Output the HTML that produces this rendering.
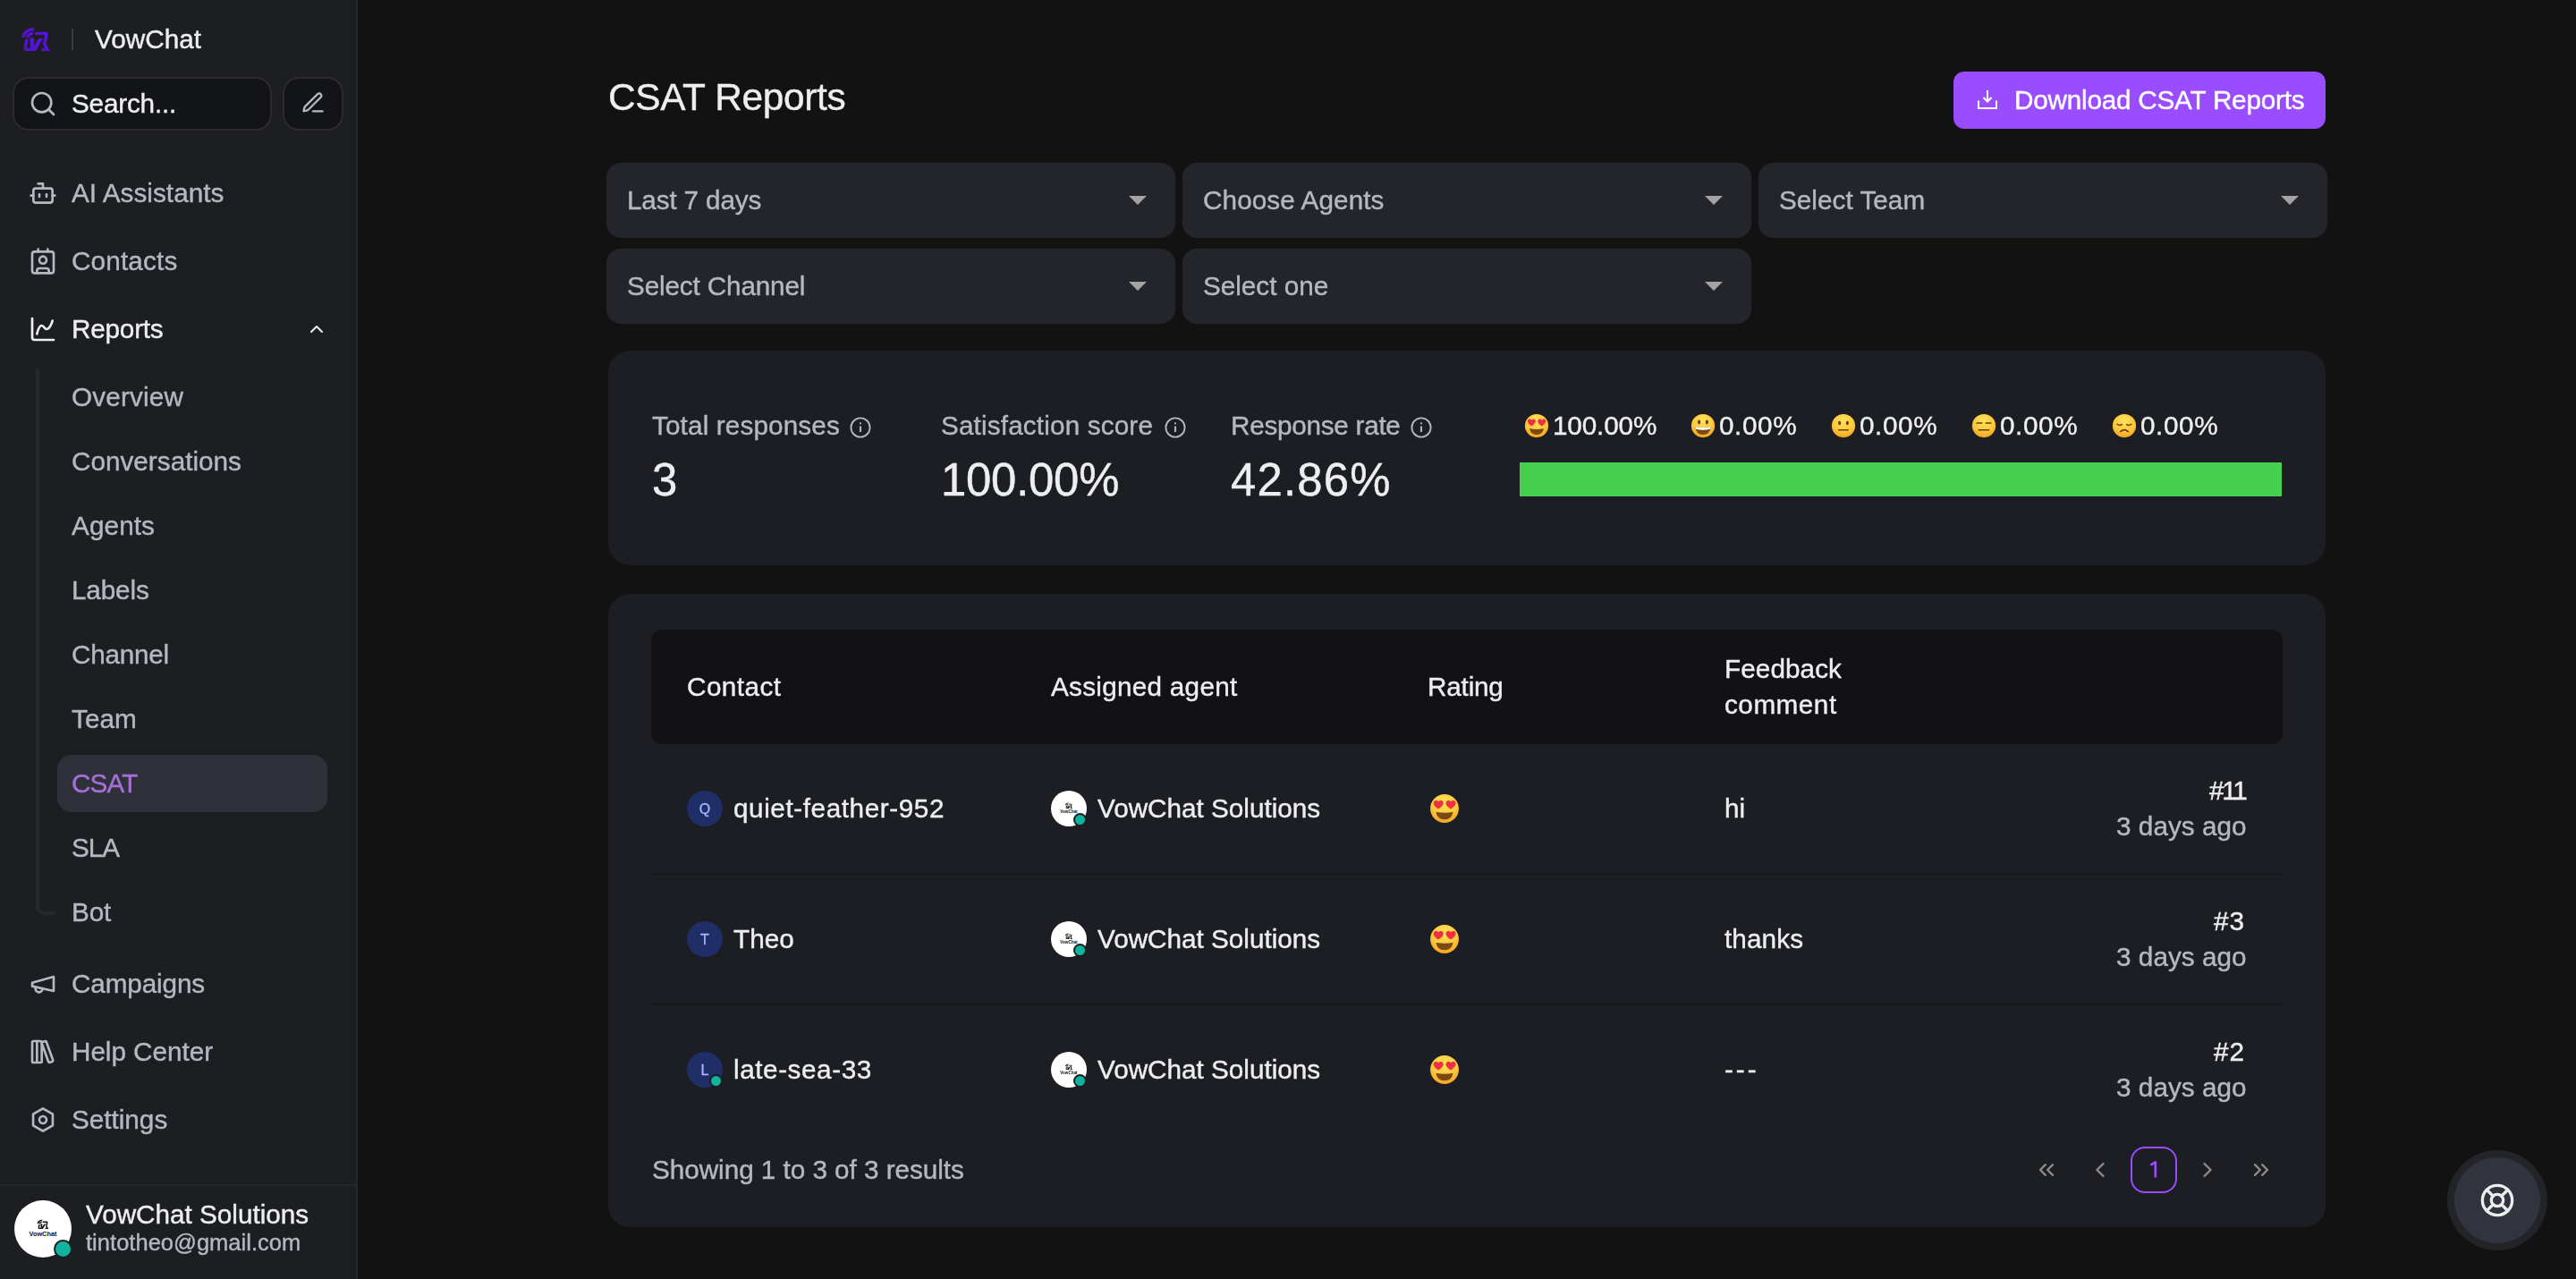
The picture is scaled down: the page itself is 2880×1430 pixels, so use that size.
<!DOCTYPE html>
<html><head><meta charset="utf-8">
<style>
*{box-sizing:border-box;margin:0;padding:0}
html,body{width:2880px;height:1430px;overflow:hidden;background:#121212}
body{font-family:"Liberation Sans",sans-serif;font-size:28px;line-height:40px;color:#edeef0;position:relative}
.a{position:absolute}
.t{position:absolute;white-space:nowrap;line-height:40px;will-change:transform;-webkit-text-stroke:0.4px currentColor}
.g{color:#b5b8c0}
svg{position:absolute;overflow:visible}
.ic{fill:none;stroke:#b5b8c0;stroke-width:2;stroke-linecap:round;stroke-linejoin:round}
#side{position:absolute;left:0;top:0;width:400px;height:1430px;background:#1d1e22;border-right:2px solid #26272b}
.box{position:absolute;border:2px solid #2b2a30;background:#131417;border-radius:18px}
.dd{position:absolute;height:84px;width:636px;background:#24252b;border-radius:16px}
.dd .t{left:23px;top:22px;color:#b5b8c0}
.dd .tri{position:absolute;right:32px;top:37px;width:0;height:0;border-left:10px solid transparent;border-right:10px solid transparent;border-top:10px solid #a3a3a3}
.card{position:absolute;left:680px;width:1920px;background:#1d1e23;border-radius:24px}
@media (max-width:1500px){html{zoom:0.5}}
</style></head><body>
<svg width="0" height="0" style="position:absolute;left:0;top:0">
<defs>
<radialGradient id="fg" cx="0.5" cy="0.3" r="0.75"><stop offset="0" stop-color="#ffe45c"></stop><stop offset="0.6" stop-color="#fcc73a"></stop><stop offset="1" stop-color="#f29a20"></stop></radialGradient>
<symbol id="face" viewBox="0 0 32 32"><circle cx="16" cy="16" r="15" fill="url(#fg)"></circle></symbol>
<symbol id="e5" viewBox="0 0 32 32"><circle cx="16" cy="16" r="15" fill="url(#fg)"></circle>
 <path d="M9.5,16.5 C5.5,13.8 3.8,11.6 4.6,9.2 C5.4,7 8.2,6.8 9.6,8.8 C11,6.8 13.8,7 14.6,9.2 C15.4,11.6 13.6,13.8 9.5,16.5Z" fill="#ef2f43"></path>
 <path d="M22.5,16.5 C18.5,13.8 16.8,11.6 17.6,9.2 C18.4,7 21.2,6.8 22.6,8.8 C24,6.8 26.8,7 27.6,9.2 C28.4,11.6 26.6,13.8 22.5,16.5Z" fill="#ef2f43"></path>
 <path d="M7,19.5 Q16,21.5 25,19.5 Q24,27.5 16,27.5 Q8,27.5 7,19.5Z" fill="#7a4a12"></path>
</symbol>
<symbol id="e4" viewBox="0 0 32 32"><circle cx="16" cy="16" r="15" fill="url(#fg)"></circle>
 <ellipse cx="11" cy="11.5" rx="1.8" ry="2.8" fill="#6b3d10"></ellipse><ellipse cx="21" cy="11.5" rx="1.8" ry="2.8" fill="#6b3d10"></ellipse>
 <path d="M6,17 Q16,19.5 26,17 Q25,27.5 16,27.5 Q7,27.5 6,17Z" fill="#7a4a12"></path>
 <path d="M6.3,17.2 Q16,19.6 25.7,17.2 L25.3,20.2 Q16,22.4 6.7,20.2Z" fill="#fff"></path>
</symbol>
<symbol id="e3" viewBox="0 0 32 32"><circle cx="16" cy="16" r="15" fill="url(#fg)"></circle>
 <ellipse cx="11" cy="12.5" rx="1.8" ry="2.6" fill="#6b3d10"></ellipse><ellipse cx="21" cy="12.5" rx="1.8" ry="2.6" fill="#6b3d10"></ellipse>
 <path d="M10,21.5 H22" stroke="#6b3d10" stroke-width="1.8" stroke-linecap="round"></path>
</symbol>
<symbol id="e2" viewBox="0 0 32 32"><circle cx="16" cy="16" r="15" fill="url(#fg)"></circle>
 <path d="M7,12.5 H13.5 M18.5,12.5 H25" stroke="#6b3d10" stroke-width="1.8" stroke-linecap="round"></path>
 <path d="M9.5,21.5 H22.5" stroke="#6b3d10" stroke-width="1.8" stroke-linecap="round"></path>
</symbol>
<symbol id="e1" viewBox="0 0 32 32"><circle cx="16" cy="16" r="15" fill="url(#fg)"></circle>
 <path d="M7,14 Q10,16.5 13,14.5 M19,14.5 Q22,16.5 25,14" stroke="#6b3d10" stroke-width="1.8" fill="none" stroke-linecap="round"></path>
 <path d="M11,23.5 Q16,19 21,23.5" stroke="#6b3d10" stroke-width="1.8" fill="none" stroke-linecap="round"></path>
</symbol>
<symbol id="info" viewBox="0 0 24 24"><circle cx="12" cy="12" r="10.6" fill="none" stroke="#b3b5ba" stroke-width="1.9"></circle><path d="M12 10.5v6.5" stroke="#b3b5ba" stroke-width="2.1"></path><circle cx="12" cy="7.3" r="1.15" fill="#b3b5ba"></circle></symbol>
<symbol id="agent" viewBox="0 0 40 40"><circle cx="20" cy="20" r="20" fill="#fff"></circle>
 <g fill="#111" transform="translate(15,12.3) scale(0.00702)"><path d="M145,560 C160,330 380,180 650,185 L640,290 C450,290 310,400 290,560 Z"></path><path d="M320,565 C340,440 450,350 605,345 L595,450 C520,460 475,510 462,565 Z"></path><path d="M290,630 L415,630 L360,990 L500,990 L480,590 L640,590 L650,900 L830,600 L990,600 L710,1100 L340,1100 Q215,1100 230,960 Z"></path><path d="M700,350 L1120,350 Q1210,350 1195,480 L1120,830 L1285,1100 L930,1100 L950,990 L1065,990 L990,840 L1060,465 L670,465 Z"></path></g>
 <text x="20" y="25.2" font-size="4.6" font-family="Liberation Sans" font-weight="bold" text-anchor="middle" fill="#111">VowChat</text>
</symbol>
</defs></svg>

<div id="side">
  <!-- logo -->
  <svg class="a" style="left:20px;top:26px" width="40" height="36" viewBox="0 0 1421 1279">
    <defs><linearGradient id="lg" x1="1" y1="0" x2="0" y2="1"><stop offset="0" stop-color="#5f0ff0"></stop><stop offset="1" stop-color="#4a17b2"></stop></linearGradient></defs>
    <g fill="url(#lg)">
    <path d="M145,560 C160,330 380,180 650,185 L640,290 C450,290 310,400 290,560 Z"></path>
    <path d="M320,565 C340,440 450,350 605,345 L595,450 C520,460 475,510 462,565 Z"></path>
    <path d="M290,630 L415,630 L360,990 L500,990 L480,590 L640,590 L650,900 L830,600 L990,600 L710,1100 L340,1100 Q215,1100 230,960 Z"></path>
    <path d="M700,350 L1120,350 Q1210,350 1195,480 L1120,830 L1285,1100 L930,1100 L950,990 L1065,990 L990,840 L1060,465 L670,465 Z"></path>
    </g>
  </svg>
  <div class="a" style="left:80px;top:32px;width:2px;height:24px;background:#3a3b3f"></div>
  <div class="t" style="left: 106px; top: 24px; letter-spacing: 0.03px; font-size: 29.68px;">VowChat</div>

  <!-- search -->
  <div class="box" style="left:14px;top:86px;width:290px;height:60px"></div>
  <svg style="left:32px;top:100px" width="32" height="32" viewBox="0 0 24 24" class="ic"><circle cx="11" cy="11" r="8"></circle><path d="m21 21-4.3-4.3"></path></svg>
  <div class="t" style="left: 80px; top: 96px; letter-spacing: -0.18px; font-size: 29.68px;">Search...</div>
  <div class="box" style="left:316px;top:86px;width:68px;height:60px"></div>
  <svg style="left:336px;top:101px" width="28" height="28" viewBox="0 0 24 24" class="ic"><path d="M12 20h9"></path><path d="M16.4 3.6a1 1 0 0 1 3 3L7.4 18.6a2 2 0 0 1-.9.5l-2.9.8a.5.5 0 0 1-.6-.6l.8-2.9a2 2 0 0 1 .5-.9z"></path></svg>

  <!-- nav -->
  <svg style="left:32px;top:200px" width="32" height="32" viewBox="0 0 24 24" class="ic"><path d="M12 8V4H8"></path><rect width="16" height="12" x="4" y="8" rx="2"></rect><path d="M2 14h2"></path><path d="M20 14h2"></path><path d="M15 13v2"></path><path d="M9 13v2"></path></svg>
  <div class="t g" style="left: 80px; top: 196px; letter-spacing: 0.04px; font-size: 29.68px;">AI Assistants</div>
  <svg style="left:32px;top:276px" width="32" height="32" viewBox="0 0 24 24" class="ic"><path d="M16 2v2"></path><path d="M7 22v-2a2 2 0 0 1 2-2h6a2 2 0 0 1 2 2v2"></path><path d="M8 2v2"></path><circle cx="12" cy="11" r="3"></circle><rect x="3" y="4" width="18" height="18" rx="2"></rect></svg>
  <div class="t g" style="left: 80px; top: 272px; letter-spacing: 0.17px; font-size: 29.68px;">Contacts</div>
  <svg style="left:32px;top:352px" width="32" height="32" viewBox="0 0 24 24" class="ic"><path style="stroke:#edeef0" d="M3 3v16a2 2 0 0 0 2 2h16"></path><path style="stroke:#edeef0" d="M7 16c.5-2 1.5-7 4-7 2 0 2 3 4 3 2.5 0 4.5-5 5-7"></path></svg>
  <div class="t" style="left: 80px; top: 348px; letter-spacing: -0.2px; font-size: 29.68px;">Reports</div>
  <svg style="left:342px;top:356px" width="24" height="24" viewBox="0 0 24 24" class="ic"><path style="stroke:#edeef0" d="m18 15-6-6-6 6"></path></svg>

  <svg style="left:0;top:0" width="400" height="1100"><path d="M42,414 V1013 a8,8 0 0 0 8,8 H60" fill="none" stroke="#26292c" stroke-width="4" stroke-linecap="round"></path></svg>
  <div class="t g" style="left: 80px; top: 424px; letter-spacing: 0.19px; font-size: 29.68px;">Overview</div>
  <div class="t g" style="left: 80px; top: 496px; letter-spacing: 0.02px; font-size: 29.68px;">Conversations</div>
  <div class="t g" style="left: 80px; top: 568px; letter-spacing: 0.11px; font-size: 29.68px;">Agents</div>
  <div class="t g" style="left: 80px; top: 640px; letter-spacing: -0.14px; font-size: 29.68px;">Labels</div>
  <div class="t g" style="left: 80px; top: 712px; letter-spacing: -0.23px; font-size: 29.68px;">Channel</div>
  <div class="t g" style="left: 80px; top: 784px; letter-spacing: 0.04px; font-size: 29.68px;">Team</div>
  <div class="a" style="left:64px;top:844px;width:302px;height:64px;border-radius:16px;background:#2e303a"></div>
  <div class="t" style="left: 80px; top: 856px; color: rgb(167, 111, 216); letter-spacing: -0.88px; font-size: 29.68px;">CSAT</div>
  <div class="t g" style="left: 80px; top: 928px; letter-spacing: -0.99px; font-size: 29.68px;">SLA</div>
  <div class="t g" style="left: 80px; top: 1000px; letter-spacing: -0.09px; font-size: 29.68px;">Bot</div>

  <svg style="left:32px;top:1084px" width="32" height="32" viewBox="0 0 24 24" class="ic"><path d="m3 11 18-5v12L3 14v-3z"></path><path d="M11.6 16.8a3 3 0 1 1-5.8-1.6"></path></svg>
  <div class="t g" style="left: 80px; top: 1080px; letter-spacing: -0.11px; font-size: 29.68px;">Campaigns</div>
  <svg style="left:32px;top:1160px" width="32" height="32" viewBox="0 0 24 24" class="ic"><rect width="8" height="18" x="3" y="3" rx="1"></rect><path d="M7 3v18"></path><path d="M20.4 18.9c.2.5-.1 1.1-.6 1.3l-1.9.7c-.5.2-1.1-.1-1.3-.6L11.1 5.1c-.2-.5.1-1.1.6-1.3l1.9-.7c.5-.2 1.1.1 1.3.6Z"></path></svg>
  <div class="t g" style="left: 80px; top: 1156px; letter-spacing: -0.03px; font-size: 29.68px;">Help Center</div>
  <svg style="left:32px;top:1236px" width="32" height="32" viewBox="0 0 24 24" class="ic"><path d="M12 2.5l8.2 4.75v9.5L12 21.5l-8.2-4.75v-9.5z"></path><circle cx="12" cy="12" r="3"></circle></svg>
  <div class="t g" style="left: 80px; top: 1232px; letter-spacing: 0px; font-size: 29.68px;">Settings</div>

  <div class="a" style="left:0;top:1324px;width:398px;height:2px;background:#26272b"></div>
  <svg style="left:16px;top:1342px" width="64" height="64" viewBox="0 0 40 40"><use href="#agent"></use></svg>
  <div class="a" style="left:60px;top:1386px;width:21px;height:21px;border-radius:50%;background:#10b39e;border:2px solid #1d1e22"></div>
  <div class="t" style="left: 96px; top: 1338px; letter-spacing: 0px; font-size: 29.68px;">VowChat Solutions</div>
  <div class="t g" style="left: 96px; top: 1372px; font-size: 25.44px; line-height: 34px; letter-spacing: 0.05px;">tintotheo@gmail.com</div>
</div>
<div class="t" style="left: 680px; top: 85px; font-size: 42.4px; line-height: 48px; font-weight: 500; letter-spacing: -0.33px;">CSAT Reports</div>
<div class="a" style="left:2184px;top:80px;width:416px;height:64px;border-radius:12px;background:#9a4cff"></div>
<svg style="left:2208px;top:98px" width="28" height="28" viewBox="0 0 28 28" fill="none" stroke="#fff" stroke-width="2" stroke-linecap="butt" stroke-linejoin="miter"><path d="M14 3v12.5"></path><path d="M9.5 11l4.5 4.5 4.5-4.5"></path><path d="M4 14.5V23H24V14.5"></path></svg>
<div class="t" style="left: 2252px; top: 92px; color: rgb(255, 255, 255); letter-spacing: -0.21px; font-size: 29.68px;">Download CSAT Reports</div>

<div class="dd" style="left:678px;top:182px"><div class="t" style="letter-spacing: -0.15px; font-size: 29.68px;">Last 7 days</div><div class="tri"></div></div>
<div class="dd" style="left:1322px;top:182px"><div class="t" style="letter-spacing: 0.1px; font-size: 29.68px;">Choose Agents</div><div class="tri"></div></div>
<div class="dd" style="left:1966px;top:182px"><div class="t" style="letter-spacing: 0.04px; font-size: 29.68px;">Select Team</div><div class="tri"></div></div>
<div class="dd" style="left:678px;top:278px"><div class="t" style="letter-spacing: -0.14px; font-size: 29.68px;">Select Channel</div><div class="tri"></div></div>
<div class="dd" style="left:1322px;top:278px"><div class="t" style="letter-spacing: -0.01px; font-size: 29.68px;">Select one</div><div class="tri"></div></div>

<div class="card" style="top:392px;height:240px"></div>
<div class="t g" style="left: 729px; top: 456px; letter-spacing: 0.14px; font-size: 29.68px;">Total responses</div>
<svg style="left:950px;top:466px" width="24" height="24"><use href="#info"></use></svg>
<div class="t" style="left: 729px; top: 509px; font-size: 50.88px; line-height: 56px; letter-spacing: 1.36px;">3</div>
<div class="t g" style="left: 1052px; top: 456px; letter-spacing: 0.16px; font-size: 29.68px;">Satisfaction score</div>
<svg style="left:1302px;top:466px" width="24" height="24"><use href="#info"></use></svg>
<div class="t" style="left: 1052px; top: 509px; font-size: 50.88px; line-height: 56px; letter-spacing: -0.24px;">100.00%</div>
<div class="t g" style="left: 1376px; top: 456px; letter-spacing: -0.26px; font-size: 29.68px;">Response rate</div>
<svg style="left:1577px;top:466px" width="24" height="24"><use href="#info"></use></svg>
<div class="t" style="left: 1376px; top: 509px; font-size: 50.88px; line-height: 56px; letter-spacing: 1.18px;">42.86%</div>

<svg style="left:1704px;top:462px" width="28" height="28"><use href="#e5"></use></svg>
<div class="t" style="left: 1736px; top: 456px; letter-spacing: -0.14px; font-size: 29.68px;">100.00%</div>
<svg style="left:1890px;top:462px" width="28" height="28"><use href="#e4"></use></svg>
<div class="t" style="left: 1922px; top: 456px; letter-spacing: 0.6px; font-size: 29.68px;">0.00%</div>
<svg style="left:2047px;top:462px" width="28" height="28"><use href="#e3"></use></svg>
<div class="t" style="left: 2079px; top: 456px; letter-spacing: 0.6px; font-size: 29.68px;">0.00%</div>
<svg style="left:2204px;top:462px" width="28" height="28"><use href="#e2"></use></svg>
<div class="t" style="left: 2236px; top: 456px; letter-spacing: 0.6px; font-size: 29.68px;">0.00%</div>
<svg style="left:2361px;top:462px" width="28" height="28"><use href="#e1"></use></svg>
<div class="t" style="left: 2393px; top: 456px; letter-spacing: 0.6px; font-size: 29.68px;">0.00%</div>

<div class="a" style="left:1699px;top:517px;width:852px;height:38px;background:#46cf4d"></div>

<div class="card" style="top:664px;height:708px"></div>
<div class="a" style="left:728px;top:704px;width:1824px;height:128px;background:#121215;border-radius:12px"></div>
<div class="t" style="left: 768px; top: 748px; font-weight: 500; letter-spacing: 0.47px; font-size: 29.68px;">Contact</div>
<div class="t" style="left: 1175px; top: 748px; font-weight: 500; letter-spacing: 0.28px; font-size: 29.68px;">Assigned agent</div>
<div class="t" style="left: 1596px; top: 748px; font-weight: 500; letter-spacing: -0.18px; font-size: 29.68px;">Rating</div>
<div class="t" style="left: 1928px; top: 728px; font-weight: 500; letter-spacing: 0.09px; font-size: 29.68px;">Feedback</div>
<div class="t" style="left: 1928px; top: 768px; font-weight: 500; letter-spacing: 0.52px; font-size: 29.68px;">comment</div>
<div class="a" style="left:768px;top:884px;width:40px;height:40px;border-radius:50%;background:#1f2e66;color:#a3b8ff;font-size:16px;line-height:42px;text-align:center;will-change:transform;-webkit-text-stroke:0.3px currentColor">Q</div>
<div class="t" style="left: 820px; top: 884px; letter-spacing: 0.59px; font-size: 29.68px;">quiet-feather-952</div>
<svg style="left:1175px;top:884px" width="40" height="40"><use href="#agent"></use></svg>
<div class="a" style="left:1200px;top:909px;width:15px;height:15px;border-radius:50%;background:#10b39e;border:2px solid #1d1e23"></div>
<div class="t" style="left: 1227px; top: 884px; letter-spacing: 0px; font-size: 29.68px;">VowChat Solutions</div>
<svg style="left:1598px;top:887px" width="34" height="34"><use href="#e5"></use></svg>
<div class="t" style="left: 1928px; top: 884px; letter-spacing: 0.12px; font-size: 29.68px;">hi</div>
<div class="t" style="right: 370px; top: 864px; letter-spacing: -2.27px; font-size: 29.68px;">#11</div>
<div class="t g" style="right: 368px; top: 904px; letter-spacing: 0.05px; font-size: 29.68px;">3 days ago</div>
<div class="a" style="left:728px;top:976px;width:1824px;height:2px;background:#18191d"></div>
<div class="a" style="left:768px;top:1030px;width:40px;height:40px;border-radius:50%;background:#1f2e66;color:#a3b8ff;font-size:16px;line-height:42px;text-align:center;will-change:transform;-webkit-text-stroke:0.3px currentColor">T</div>
<div class="t" style="left: 820px; top: 1030px; letter-spacing: 0.03px; font-size: 29.68px;">Theo</div>
<svg style="left:1175px;top:1030px" width="40" height="40"><use href="#agent"></use></svg>
<div class="a" style="left:1200px;top:1055px;width:15px;height:15px;border-radius:50%;background:#10b39e;border:2px solid #1d1e23"></div>
<div class="t" style="left: 1227px; top: 1030px; letter-spacing: 0px; font-size: 29.68px;">VowChat Solutions</div>
<svg style="left:1598px;top:1033px" width="34" height="34"><use href="#e5"></use></svg>
<div class="t" style="left: 1928px; top: 1030px; letter-spacing: 0.12px; font-size: 29.68px;">thanks</div>
<div class="t" style="right: 370px; top: 1010px; letter-spacing: 1.01px; font-size: 29.68px;">#3</div>
<div class="t g" style="right: 368px; top: 1050px; letter-spacing: 0.05px; font-size: 29.68px;">3 days ago</div>
<div class="a" style="left:728px;top:1122px;width:1824px;height:2px;background:#18191d"></div>
<div class="a" style="left:768px;top:1176px;width:40px;height:40px;border-radius:50%;background:#1f2e66;color:#a3b8ff;font-size:16px;line-height:42px;text-align:center;will-change:transform;-webkit-text-stroke:0.3px currentColor">L</div>
<div class="a" style="left:793px;top:1201px;width:15px;height:15px;border-radius:50%;background:#10b39e;border:2px solid #1d1e23"></div>
<div class="t" style="left: 820px; top: 1176px; letter-spacing: 0.58px; font-size: 29.68px;">late-sea-33</div>
<svg style="left:1175px;top:1176px" width="40" height="40"><use href="#agent"></use></svg>
<div class="a" style="left:1200px;top:1201px;width:15px;height:15px;border-radius:50%;background:#10b39e;border:2px solid #1d1e23"></div>
<div class="t" style="left: 1227px; top: 1176px; letter-spacing: 0px; font-size: 29.68px;">VowChat Solutions</div>
<svg style="left:1598px;top:1179px" width="34" height="34"><use href="#e5"></use></svg>
<div class="t" style="left: 1928px; top: 1176px; letter-spacing: 2.99px; font-size: 29.68px;">---</div>
<div class="t" style="right: 370px; top: 1156px; letter-spacing: 0.9px; font-size: 29.68px;">#2</div>
<div class="t g" style="right: 368px; top: 1196px; letter-spacing: 0.05px; font-size: 29.68px;">3 days ago</div>

<div class="t g" style="left: 729px; top: 1288px; letter-spacing: -0.03px; font-size: 29.68px;">Showing 1 to 3 of 3 results</div>
<svg style="left:2274px;top:1294px" width="28" height="28" viewBox="0 0 24 24" fill="none" stroke="#8c8c8c" stroke-width="2" stroke-linecap="round" stroke-linejoin="round"><path d="m11 17-5-5 5-5"></path><path d="m18 17-5-5 5-5"></path></svg>
<svg style="left:2334px;top:1294px" width="28" height="28" viewBox="0 0 24 24" fill="none" stroke="#8c8c8c" stroke-width="2" stroke-linecap="round" stroke-linejoin="round"><path d="m15 18-6-6 6-6"></path></svg>
<div class="a" style="left:2382px;top:1282px;width:52px;height:52px;border:2.5px solid #9a4cff;border-radius:16px"></div>
<svg style="left:0;top:0" width="2880" height="1430"><path d="M2404.3,1302.6 L2409.8,1299.4 V1316.4" fill="none" stroke="#9a4cff" stroke-width="2.6" stroke-linejoin="round"></path></svg>
<svg style="left:2454px;top:1294px" width="28" height="28" viewBox="0 0 24 24" fill="none" stroke="#8c8c8c" stroke-width="2" stroke-linecap="round" stroke-linejoin="round"><path d="m9 18 6-6-6-6"></path></svg>
<svg style="left:2514px;top:1294px" width="28" height="28" viewBox="0 0 24 24" fill="none" stroke="#8c8c8c" stroke-width="2" stroke-linecap="round" stroke-linejoin="round"><path d="m6 17 5-5-5-5"></path><path d="m13 17 5-5-5-5"></path></svg>
<div class="a" style="left:2736px;top:1286px;width:112px;height:112px;border-radius:50%;background:#232428"></div>
<div class="a" style="left:2744px;top:1294px;width:96px;height:96px;border-radius:50%;background:#31333f"></div>
<svg style="left:2772px;top:1322px" width="40" height="40" viewBox="0 0 24 24" fill="none" stroke="#ececec" stroke-width="2" stroke-linecap="round" stroke-linejoin="round"><circle cx="12" cy="12" r="10"></circle><path d="m4.93 4.93 4.24 4.24"></path><path d="m14.83 9.17 4.24-4.24"></path><path d="m14.83 14.83 4.24 4.24"></path><path d="m9.17 14.83-4.24 4.24"></path><circle cx="12" cy="12" r="4"></circle></svg>



</body></html>
